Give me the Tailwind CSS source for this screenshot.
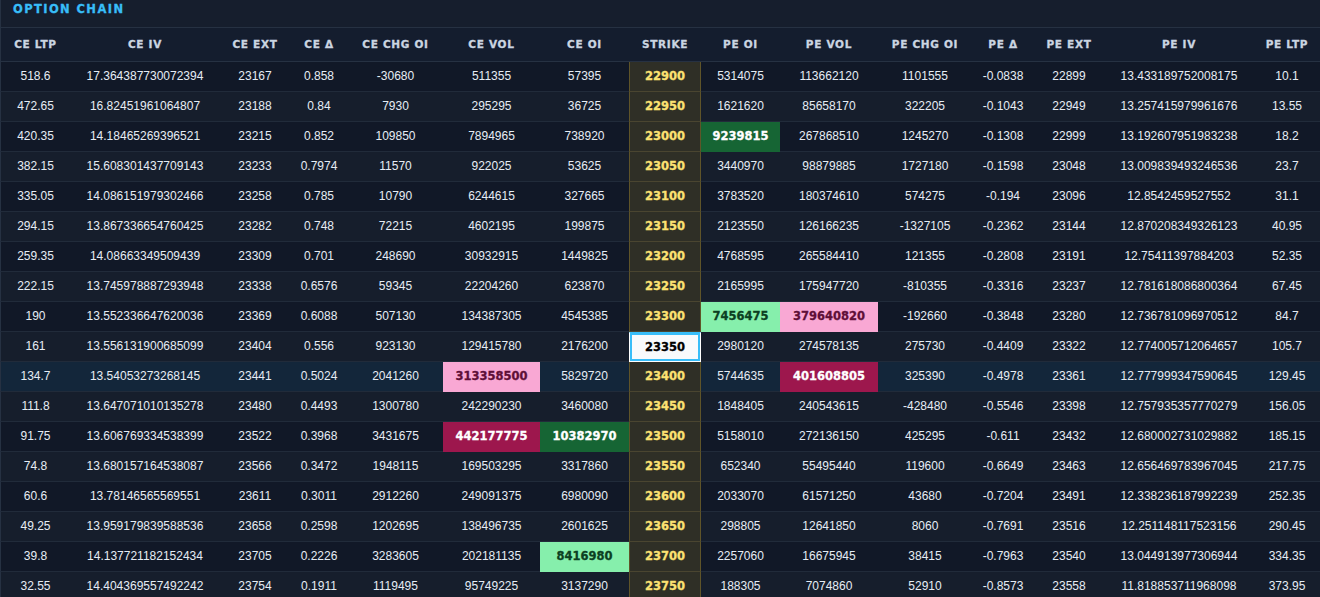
<!DOCTYPE html>
<html lang="en">
<head>
  <meta charset="UTF-8">
  <title>Option Chain</title>
  <script src="https://cdn.jsdelivr.net/npm/@tailwindcss/browser@4"></script>
</head>
<body class="bg-[#111827] overflow-hidden h-[597px] font-['Liberation_Sans',Arial,sans-serif] text-[12px] text-[#e6edf5]">

  <!-- Title bar -->
  <div class="h-[28px] bg-[#161e2d] border-b border-l border-[#263142] pl-[12px] pt-[2px] leading-[15px] text-[#38bdf8] text-[11.5px] font-bold tracking-[1.4px] font-['DejaVu_Sans',sans-serif] [-webkit-text-stroke:0.3px_currentColor]">OPTION CHAIN</div>

  <table class="table-fixed border-separate border-spacing-0 w-[1320px]">
    <colgroup>
      <col class="w-[70px]"><col class="w-[150px]"><col class="w-[70px]"><col class="w-[58px]"><col class="w-[95px]">
      <col class="w-[97px]"><col class="w-[89px]"><col class="w-[72px]"><col class="w-[79px]"><col class="w-[98px]">
      <col class="w-[94px]"><col class="w-[62px]"><col class="w-[70px]"><col class="w-[150px]"><col class="w-[66px]">
    </colgroup>
    <thead>
      <tr id="head" class="h-[34px] bg-[#141d2e]"></tr>
    </thead>
    <tbody id="rows"></tbody>
  </table>

  <script>
    const headers = ["CE LTP", "CE IV", "CE EXT", "CE Δ", "CE CHG OI", "CE VOL", "CE OI", "STRIKE", "PE OI", "PE VOL", "PE CHG OI", "PE Δ", "PE EXT", "PE IV", "PE LTP"];

    const data = [
      ["518.6", "17.364387730072394", "23167", "0.858", "-30680", "511355", "57395", "22900", "5314075", "113662120", "1101555", "-0.0838", "22899", "13.433189752008175", "10.1"],
      ["472.65", "16.82451961064807", "23188", "0.84", "7930", "295295", "36725", "22950", "1621620", "85658170", "322205", "-0.1043", "22949", "13.257415979961676", "13.55"],
      ["420.35", "14.18465269396521", "23215", "0.852", "109850", "7894965", "738920", "23000", "9239815", "267868510", "1245270", "-0.1308", "22999", "13.192607951983238", "18.2"],
      ["382.15", "15.608301437709143", "23233", "0.7974", "11570", "922025", "53625", "23050", "3440970", "98879885", "1727180", "-0.1598", "23048", "13.009839493246536", "23.7"],
      ["335.05", "14.086151979302466", "23258", "0.785", "10790", "6244615", "327665", "23100", "3783520", "180374610", "574275", "-0.194", "23096", "12.8542459527552", "31.1"],
      ["294.15", "13.867336654760425", "23282", "0.748", "72215", "4602195", "199875", "23150", "2123550", "126166235", "-1327105", "-0.2362", "23144", "12.870208349326123", "40.95"],
      ["259.35", "14.08663349509439", "23309", "0.701", "248690", "30932915", "1449825", "23200", "4768595", "265584410", "121355", "-0.2808", "23191", "12.75411397884203", "52.35"],
      ["222.15", "13.745978887293948", "23338", "0.6576", "59345", "22204260", "623870", "23250", "2165995", "175947720", "-810355", "-0.3316", "23237", "12.781618086800364", "67.45"],
      ["190", "13.552336647620036", "23369", "0.6088", "507130", "134387305", "4545385", "23300", "7456475", "379640820", "-192660", "-0.3848", "23280", "12.736781096970512", "84.7"],
      ["161", "13.556131900685099", "23404", "0.556", "923130", "129415780", "2176200", "23350", "2980120", "274578135", "275730", "-0.4409", "23322", "12.774005712064657", "105.7"],
      ["134.7", "13.54053273268145", "23441", "0.5024", "2041260", "313358500", "5829720", "23400", "5744635", "401608805", "325390", "-0.4978", "23361", "12.777999347590645", "129.45"],
      ["111.8", "13.647071010135278", "23480", "0.4493", "1300780", "242290230", "3460080", "23450", "1848405", "240543615", "-428480", "-0.5546", "23398", "12.757935357770279", "156.05"],
      ["91.75", "13.606769334538399", "23522", "0.3968", "3431675", "442177775", "10382970", "23500", "5158010", "272136150", "425295", "-0.611", "23432", "12.680002731029882", "185.15"],
      ["74.8", "13.680157164538087", "23566", "0.3472", "1948115", "169503295", "3317860", "23550", "652340", "55495440", "119600", "-0.6649", "23463", "12.656469783967045", "217.75"],
      ["60.6", "13.78146565569551", "23611", "0.3011", "2912260", "249091375", "6980090", "23600", "2033070", "61571250", "43680", "-0.7204", "23491", "12.338236187992239", "252.35"],
      ["49.25", "13.959179839588536", "23658", "0.2598", "1202695", "138496735", "2601625", "23650", "298805", "12641850", "8060", "-0.7691", "23516", "12.251148117523156", "290.45"],
      ["39.8", "14.137721182152434", "23705", "0.2226", "3283605", "202181135", "8416980", "23700", "2257060", "16675945", "38415", "-0.7963", "23540", "13.044913977306944", "334.35"],
      ["32.55", "14.404369557492242", "23754", "0.1911", "1119495", "95749225", "3137290", "23750", "188305", "7074860", "52910", "-0.8573", "23558", "11.818853711968098", "373.95"]
    ];

    // bold value shared by strike and highlighted cells
    const heavy = "pt-[1px] font-['DejaVu_Sans',sans-serif] font-bold text-[11.5px] [-webkit-text-stroke:0.3px_currentColor]";

    // OI cells are green, volume cells are pink
    const styles = {
      greenDark: "bg-[#166534] text-white border-b-transparent " + heavy,
      greenLight: "bg-[#86efac] text-[#0c3f22] border-b-transparent " + heavy,
      pinkDark: "bg-[#9d174d] text-white border-b-transparent " + heavy,
      pinkLight: "bg-[#f9a8d4] text-[#5f0f38] border-b-transparent " + heavy
    };

    // strike: { column index: style }
    const highlights = {
      "23000": { 8: "greenDark" },
      "23300": { 8: "greenLight", 9: "pinkLight" },
      "23400": { 5: "pinkLight", 9: "pinkDark" },
      "23500": { 5: "pinkDark", 6: "greenDark" },
      "23700": { 6: "greenLight" }
    };

    document.getElementById("head").innerHTML = headers.map(h =>
      `<th class="border-b border-[#263142] p-0 pt-[1px] text-center text-[#cbd5e1] text-[10.5px] font-bold tracking-[0.7px] font-['DejaVu_Sans',sans-serif] [-webkit-text-stroke:0.3px_currentColor] first:border-l">${h}</th>`
    ).join("");

    document.getElementById("rows").innerHTML = data.map((row, i) => {
      const strike = row[7];
      let rowBg = i % 2 === 0 ? "bg-[#111827]" : "bg-[#161e2c]";
      if (strike === "23400") rowBg = "bg-[#13263a]";

      const cells = row.map((value, col) => {
        const hl = (highlights[strike] || {})[col];
        let cls = "border-b border-[#212b3a] p-0 pb-[2px] text-center first:border-l first:border-l-[#263142]";
        if (col === 7) {
          if (strike === "23350") {
            cls = "p-0 text-center bg-[#f8fafc] text-black border border-white border-t-[#38bdf8] shadow-[inset_0_0_0_2px_#38bdf8] " + heavy;
          } else {
            cls = "border-b border-b-[#4a4530] border-x border-x-[#5f5429] p-0 text-center bg-[#2f2f26] text-[#fde272] " + heavy;
          }
        } else if (hl) {
          cls = "border-b p-0 text-center " + styles[hl];
        }
        return `<td class="${cls}">${value}</td>`;
      }).join("");

      return `<tr class="h-[30px] ${rowBg}">${cells}</tr>`;
    }).join("");
  </script>
</body>
</html>
